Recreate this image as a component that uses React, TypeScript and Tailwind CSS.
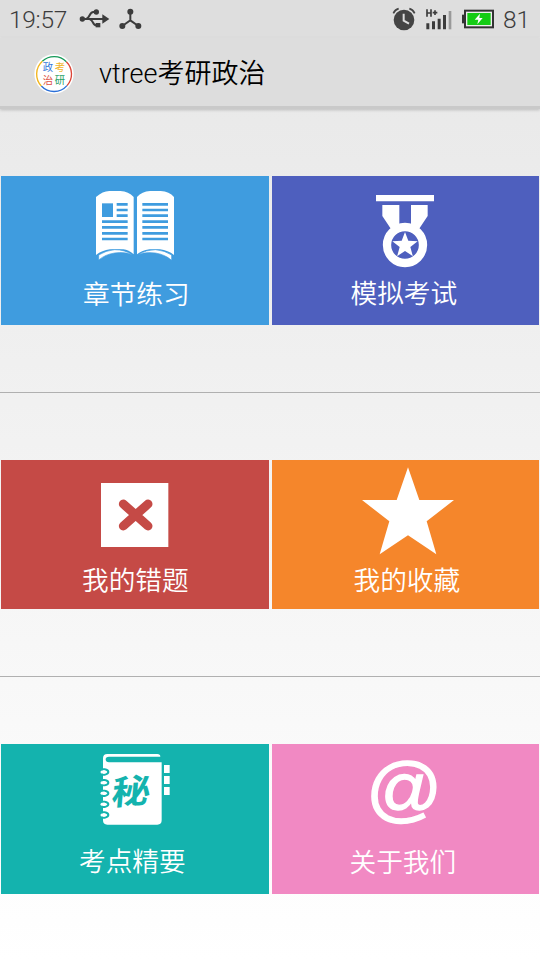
import type { ReactNode } from 'react'

const star = (cx: number, cy: number, r: number, inner: number) =>
    Array.from({ length: 10 }, (_, i) => {
        const k = i % 2 ? r * inner : r
        const a = (Math.PI / 5) * i
        return `${(cx + k * Math.sin(a)).toFixed(1)},${(cy - k * Math.cos(a)).toFixed(1)}`
    }).join(' ')

function StatusBar() {
    return (
        <div className="h-[38px] shrink-0 flex items-center justify-between pl-[9px] pr-[9px] bg-[#dedede] border-b border-[#e4e4e4] text-[#3c3c3c] font-['Roboto',sans-serif] font-light text-[24.5px] leading-none">
            <div className="flex items-center">
                <span className="w-[70px] pt-[3px] tracking-[-0.3px]">19:57</span>
                {/*usb*/}
                <svg className="w-[31px] h-[20px] mt-px" viewBox="0 0 93 60" fill="none" stroke="currentColor" strokeWidth="6">
                    <circle cx="10" cy="30" r="8" fill="currentColor" stroke="none" />
                    <path d="M10 30H72M22 29C34 27 30 9 43 9H50M32 31C44 33 40 49 52 49H56" />
                    <path d="M70 16L91 30L70 44Z" fill="currentColor" stroke="none" />
                    <circle cx="52" cy="9" r="8" fill="currentColor" stroke="none" />
                    <rect x="50" y="42" width="14" height="13" fill="currentColor" stroke="none" />
                </svg>
                {/*share dots*/}
                <svg className="w-[23px] h-[22px] ml-[9px]" viewBox="0 0 69 66" fill="currentColor">
                    <path d="M34 12V37L10 54M34 37L58 54" fill="none" stroke="currentColor" strokeWidth="6" />
                    <circle cx="34" cy="11" r="9" />
                    <circle cx="10" cy="54" r="9" />
                    <circle cx="58" cy="54" r="9" />
                </svg>
            </div>
            <div className="flex items-center">
                {/*alarm*/}
                <svg className="w-[24px] h-[24px]" viewBox="0 0 72 72" fill="none" stroke="#444">
                    <circle cx="36" cy="39" r="31" fill="#444" stroke="none" />
                    <path d="M4 19Q9 8 20 5M52 5Q63 8 68 19" strokeWidth="5" />
                    <path d="M35 20V41L51 50" stroke="#dedede" strokeWidth="6" />
                </svg>
                {/*signal*/}
                <svg className="w-[27px] h-[22px] ml-[9px]" viewBox="0 0 81 66" fill="#3c3c3c">
                    <path d="M6 4V26M18 4V26M6 15H18M23 14H37M30 7V21" fill="none" stroke="#3c3c3c" strokeWidth="5" />
                    <path d="M4 46h9v18h-9zM21 40h9v24h-9zM38 32h9v32h-9zM54 21h9v43h-9z" />
                    <path d="M71 9h8v55h-8z" fill="#999" />
                </svg>
                {/*battery*/}
                <svg className="w-[33px] h-[20px] ml-[9px]" viewBox="0 0 99 60">
                    <path d="M3 17h8v26h-8z" fill="#333" />
                    <rect x="12" y="5" width="84" height="50" fill="#eee" stroke="#333" strokeWidth="6" />
                    <rect x="19" y="12" width="70" height="36" fill="#14cc14" />
                    <path d="M57 14L41 32H52L49 46L65 27H55Z" fill="#fff" />
                </svg>
                <span className="ml-[9px] pt-[3px] w-[28px]">81</span>
            </div>
        </div>
    )
}

function Logo() {
    return (
        <svg className="w-[40px] h-[40px] mt-[3px]" viewBox="0 0 120 120">
            <circle cx="60" cy="60" r="59" fill="#fff" />
            <g fill="none" strokeWidth="4">
                <path d="M25 22A52 52 0 0 1 97 23" stroke="#159a58" />
                <path d="M97 23A52 52 0 0 1 99 95" stroke="#dc4437" />
                <path d="M99 95A52 52 0 0 1 22 96" stroke="#2a6fd8" />
                <path d="M22 96A52 52 0 0 1 25 22" stroke="#f2b51d" />
            </g>
            <g className="font-['Noto_Sans_CJK_SC',sans-serif]" fontSize="31" fontWeight="400">
                <text x="26" y="51" fill="#3478db">政</text>
                <text x="62" y="51" fill="#f0b429">考</text>
                <text x="26" y="91" fill="#dd5145">治</text>
                <text x="62" y="91" fill="#26a065">研</text>
            </g>
        </svg>
    )
}

const icons: Record<string, ReactNode> = {
    book: (
        <>
            <path d="M78 66Q98 48 118 48H151Q176 50 191 66V238Q176 225 160 223H120Q96 226 78 240ZM201 66Q216 50 240 48H272Q298 50 312 66V240Q294 226 270 223H238Q216 226 201 238Z" />
            <path d="M86 240Q108 226 134 224Q164 224 187 239Q164 230 134 234Q106 238 86 255ZM205 239Q228 224 256 224Q284 226 305 240V256Q284 238 256 234Q228 230 205 239Z" stroke="#3f9cdf" strokeWidth="2" />
            <path d="M96 85h33v41h-33z" fill="#3f9cdf" />
            <path d="M140 88H173M140 105H173M140 122H173M96 140H173M96 157H173M96 175H173M96 192H173M217 88H294M217 105H294M217 122H294M217 140H294M217 157H294M217 175H294M217 192H294" stroke="#3f9cdf" strokeWidth="8" />
        </>
    ),
    medal: (
        <>
            <path d="M123 60h174v19h-174zM142 90H193V152L168 162L142 123ZM228 90H278V123L252 162L228 152Z" />
            <circle cx="210" cy="210" r="54" fill="none" stroke="#fff" strokeWidth="25" />
            <polygon points={star(210, 211, 40, 0.42)} />
        </>
    ),
    wrong: (
        <>
            <path d="M93 72h202v192H93z" />
            <path d="M160 135L234 201M234 135L160 201" stroke="#c54a46" strokeWidth="27" strokeLinecap="round" />
        </>
    ),
    star: <polygon points="219,25 253,123 357,123 275,187 304,286 219,229 134,286 163,187 81,123 185,123" />,
    note: (
        <>
            <path d="M112 33H262Q271 34 271 41H117Q107 41 107 49Q107 58 117 58H275V232Q275 245 262 245H112Q99 245 99 232V46Q99 33 112 33Z" />
            <path d="M282 66h17v24h-17zM282 99h17v24h-17zM282 132h17v24h-17z" />
            {[87, 119, 151, 184, 216].map((y) => (
                <g key={y} fill="none" strokeLinecap="round">
                    <path d={`M94 ${y - 8}H104Q115 ${y - 6} 115 ${y}Q115 ${y + 6} 104 ${y + 8}H94`} stroke="#14b3ae" strokeWidth="6" />
                    <path d={`M96 ${y}H104`} stroke="#fff" strokeWidth="9" />
                </g>
            ))}
            <text transform="translate(122 187) rotate(-5) skewX(-10) scale(1.17 1)" fontSize="100" fontWeight="700" fill="#14b3ae" className="font-['Noto_Sans_CJK_SC',sans-serif]">秘</text>
        </>
    ),
    at: (
        <text transform="translate(93 210) scale(1.03 1)" fontSize="219" stroke="#fff" strokeWidth="4" className="font-['Liberation_Sans',sans-serif]">@</text>
    ),
}

type Item = { icon: string; label: string; tile: string; iconPos: string; labelPos: string }

const rows: Item[][] = [
    [
        { icon: 'book', label: '章节练习', tile: 'bg-[#3f9cdf]', iconPos: 'ml-[69px]', labelPos: 'pl-[82px] pt-[2px]' },
        { icon: 'medal', label: '模拟考试', tile: 'bg-[#4e5fbe]', iconPos: 'ml-[63.5px]', labelPos: 'pl-[79px] pt-[1px]' },
    ],
    [
        { icon: 'wrong', label: '我的错题', tile: 'bg-[#c54a46]', iconPos: 'ml-[69px]', labelPos: 'pl-[81px] pt-[4px]' },
        { icon: 'star', label: '我的收藏', tile: 'bg-[#f5862b]', iconPos: 'ml-[63.5px]', labelPos: 'pl-[82px] pt-[4px]' },
    ],
    [
        { icon: 'note', label: '考点精要', tile: 'bg-[#14b3ae]', iconPos: 'ml-[69px]', labelPos: 'pl-[78px] pt-[1px]' },
        { icon: 'at', label: '关于我们', tile: 'bg-[#f189c3]', iconPos: 'ml-[63.5px]', labelPos: 'pl-[78px] pt-[2px]' },
    ],
]

function Tile({ icon, label, tile, iconPos, labelPos }: Item) {
    return (
        <button className={`flex-1 h-[149.5px] flex flex-col items-start text-white ${tile}`}>
            <svg className={`w-[140px] h-[100px] shrink-0 ${iconPos}`} viewBox="0 3 420 300" fill="#fff">
                {icons[icon]}
            </svg>
            <span className={`text-[26.7px] leading-[30px] whitespace-nowrap font-[350] font-['Noto_Sans_CJK_SC',sans-serif] ${labelPos}`}>{label}</span>
        </button>
    )
}

export default function App() {
    return (
        <div className="w-[540px] h-[960px] flex flex-col overflow-hidden bg-linear-to-b from-[#e7e7e7] to-white">
            <StatusBar />
            <header className="h-[71px] shrink-0 flex items-center pl-[34px] bg-[#dddddd] border-b-[3px] border-[#c9c9c9] shadow-[0_1px_3px_rgba(0,0,0,0.2)]">
                <Logo />
                <h1 className="ml-[25px] mt-[5px] text-[27px] leading-none text-black font-['Roboto','Noto_Sans_CJK_SC',sans-serif] font-[350]">vtree考研政治</h1>
            </header>
            <main>
                {rows.map((row, i) => (
                    <section key={i} className={`h-[284px] shrink-0 flex items-center gap-[3px] px-px ${i < 2 ? 'border-b border-[#b0b0b0]' : ''}`}>
                        {row.map((item) => (
                            <Tile key={item.label} {...item} />
                        ))}
                    </section>
                ))}
            </main>
        </div>
    )
}
